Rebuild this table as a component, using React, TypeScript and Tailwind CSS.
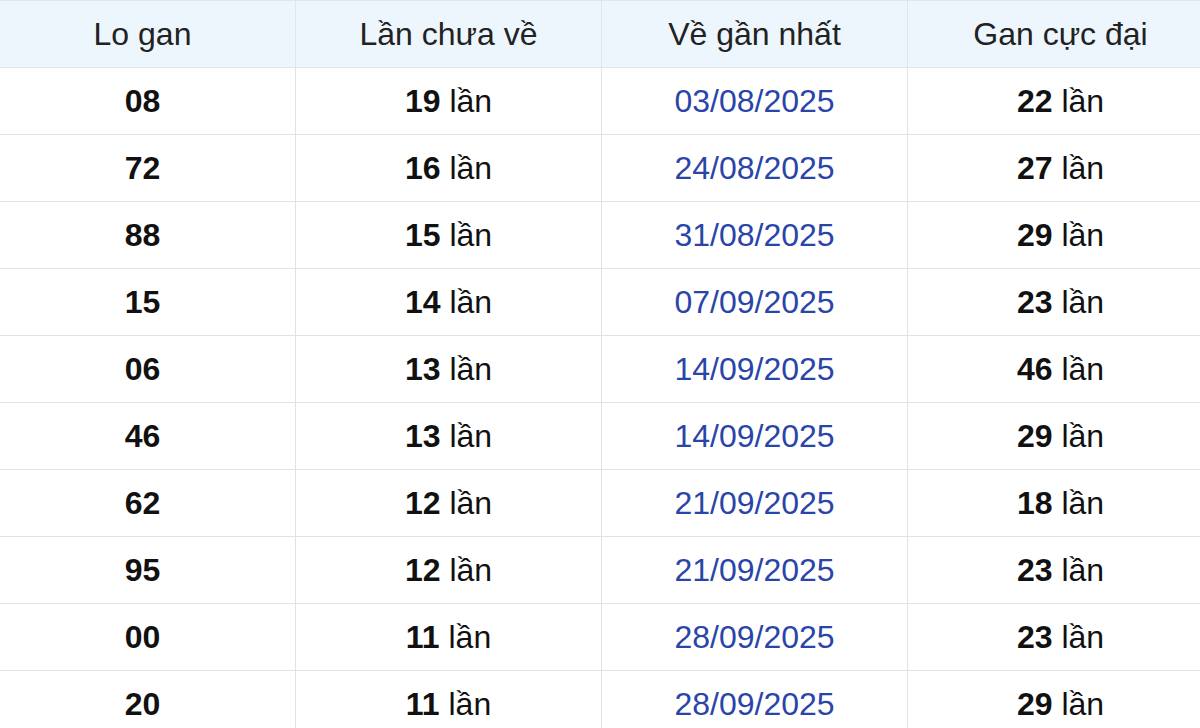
import React from "react";

interface Row {
  lo: string;
  chuaVe: number;
  ganNhat: string;
  cucDai: number;
}

const rows: Row[] = [
  { lo: "08", chuaVe: 19, ganNhat: "03/08/2025", cucDai: 22 },
  { lo: "72", chuaVe: 16, ganNhat: "24/08/2025", cucDai: 27 },
  { lo: "88", chuaVe: 15, ganNhat: "31/08/2025", cucDai: 29 },
  { lo: "15", chuaVe: 14, ganNhat: "07/09/2025", cucDai: 23 },
  { lo: "06", chuaVe: 13, ganNhat: "14/09/2025", cucDai: 46 },
  { lo: "46", chuaVe: 13, ganNhat: "14/09/2025", cucDai: 29 },
  { lo: "62", chuaVe: 12, ganNhat: "21/09/2025", cucDai: 18 },
  { lo: "95", chuaVe: 12, ganNhat: "21/09/2025", cucDai: 23 },
  { lo: "00", chuaVe: 11, ganNhat: "28/09/2025", cucDai: 23 },
  { lo: "20", chuaVe: 11, ganNhat: "28/09/2025", cucDai: 29 },
];

export default function App() {
  return (
    <div
      className="w-[1200px] h-[728px] overflow-hidden bg-white"
      style={{ fontFamily: '"Liberation Sans", Arial, sans-serif' }}
    >
      <table className="-ml-[11px] w-[1224px] table-fixed border-collapse text-[32px] leading-none">
        <thead>
          <tr className="h-[67px] bg-[#eef6fd] text-[#222]">
            <th className="w-[306px] border border-[#e2e6ea] font-normal">Lo gan</th>
            <th className="w-[306px] border border-[#e2e6ea] font-normal">Lần chưa về</th>
            <th className="w-[306px] border border-[#e2e6ea] font-normal">Về gần nhất</th>
            <th className="w-[306px] border border-[#e2e6ea] font-normal">Gan cực đại</th>
          </tr>
        </thead>
        <tbody>
          {rows.map((r, i) => (
            <tr key={i} className="h-[67px] text-center text-[#111]">
              <td className="border border-[#e2e2e2] font-bold">{r.lo}</td>
              <td className="border border-[#e2e2e2]">
                <span className="font-bold">{r.chuaVe}</span> lần
              </td>
              <td className="border border-[#e2e2e2] text-[#2a45a8]">{r.ganNhat}</td>
              <td className="border border-[#e2e2e2]">
                <span className="font-bold">{r.cucDai}</span> lần
              </td>
            </tr>
          ))}
        </tbody>
      </table>
    </div>
  );
}
